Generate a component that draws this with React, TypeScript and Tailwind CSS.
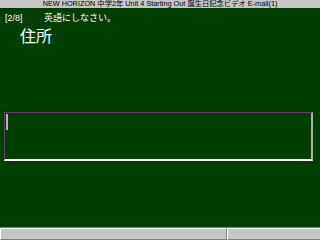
export default function App() {
  return (
    <div
      className="w-[320px] h-[240px] flex flex-col bg-[#003f00] overflow-hidden"
      style={{ fontFamily: '"Liberation Sans", "Noto Sans CJK JP", sans-serif' }}
    >
      {/* タイトルバー */}
      <div className="h-[8px] bg-[#c6c6c6] flex items-center justify-center text-[7.3px] leading-none text-black whitespace-nowrap">
        NEW HORIZON 中学2年 Unit 4 Starting Out 誕生日記念ビデオ E-mail(1)
      </div>

      {/* 問題文 */}
      <div className="flex items-center h-[12px] mt-[4px] text-[9px] leading-none text-white">
        <span className="pl-[5px] w-[44px]">[2/8]</span>
        <span>英語にしなさい。</span>
      </div>
      <div className="pl-[20px] mt-[4px] text-[16px] leading-[18px] text-white">住所</div>

      {/* 入力欄 */}
      <div className="mt-[66px] ml-[4px] w-[309px] h-[49px] border-t border-l border-[#6a3f6a] border-r-2 border-r-[#a8b4a8] border-b-2 border-b-white flex items-start">
        <div className="ml-[1px] mt-[1px] w-[2px] h-[16px] bg-[#b0b8b0]" />
      </div>

      {/* ステータスバー */}
      <div className="mt-auto h-[13px] bg-[#c6c6c6] border-t border-[#7a8a7a] flex">
        <div className="w-[227px] border-t border-l border-white border-b border-b-[#808080] border-r border-r-[#808080]" />
        <div className="flex-1 border-t border-l border-white border-b border-b-[#808080]" />
      </div>
    </div>
  );
}
